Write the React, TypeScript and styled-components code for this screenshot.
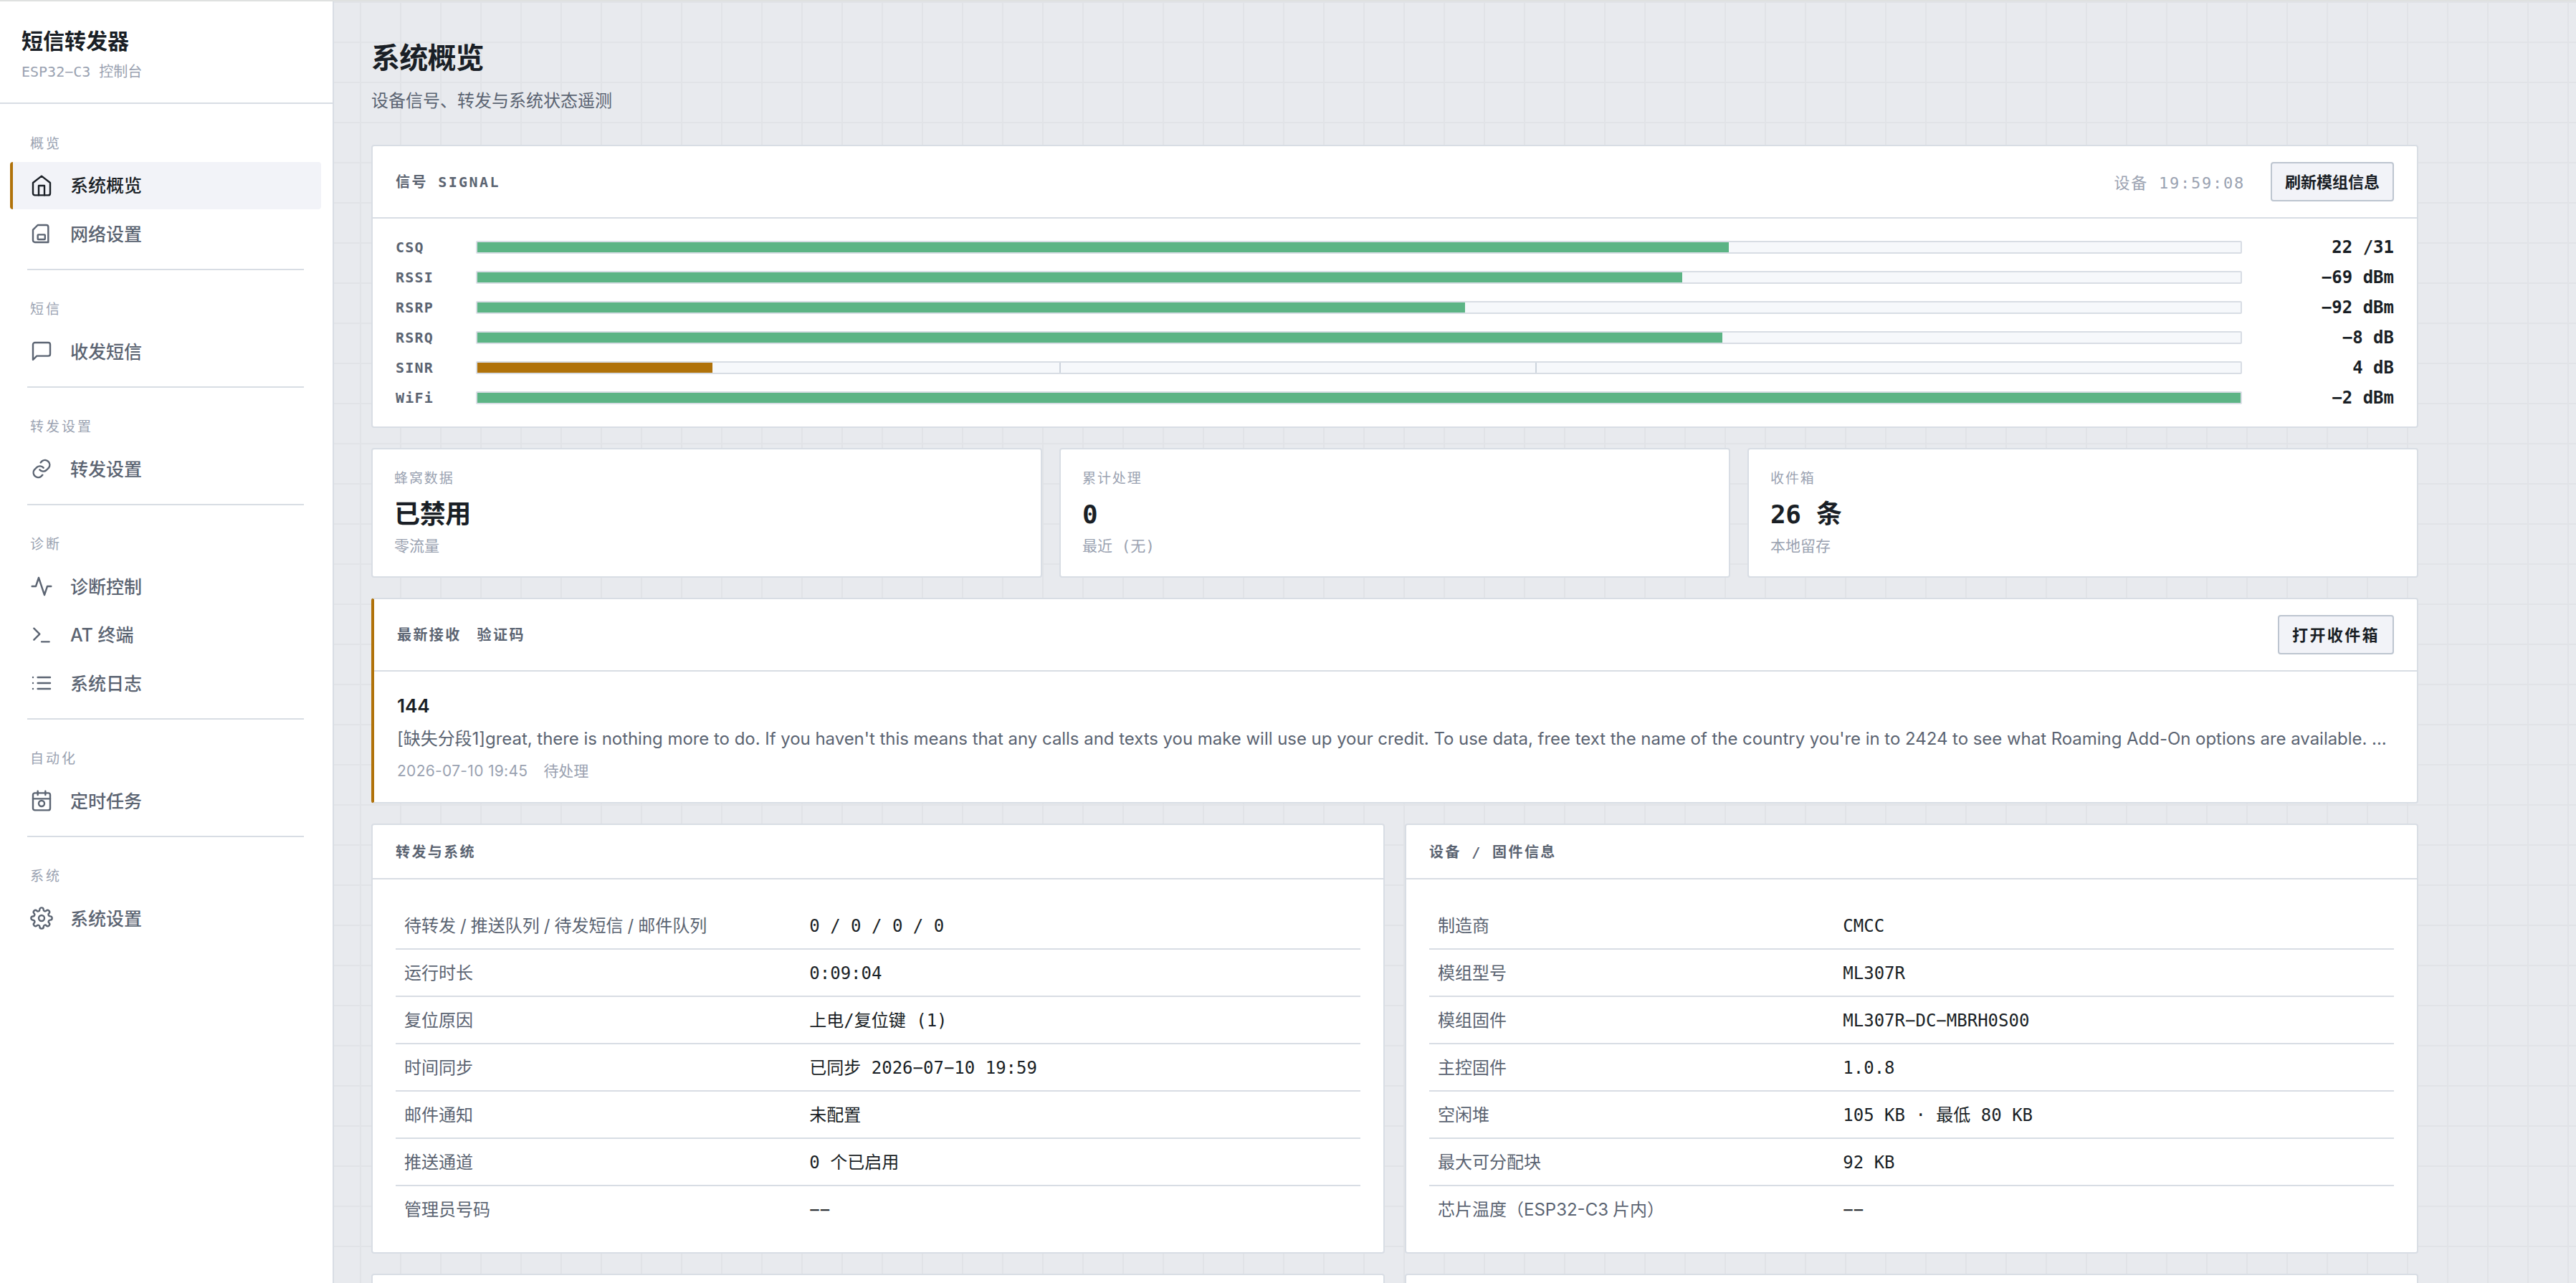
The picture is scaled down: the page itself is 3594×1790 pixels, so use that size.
import React from 'react';
import styled, { createGlobalStyle, css } from 'styled-components';

const theme = {
  sans: '"Inter", "Noto Sans CJK SC", sans-serif',
  mono: '"DejaVu Sans Mono", "Noto Sans CJK SC", monospace',
  colors: {
    page: '#e8eaee',
    grid: '#e1e3e7',
    surface: '#ffffff',
    raised: '#f2f3f8',
    track: '#f6f8fb',
    line: '#d8dde4',
    lineStrong: '#bdc5d0',
    tick: '#cdd4dd',
    text: '#1a1f26',
    muted: '#5b6472',
    faint: '#9aa2b1',
    ok: '#5cb485',
    warn: '#b0720a',
  },
};

const GlobalStyle = createGlobalStyle`
  * {
    box-sizing: border-box;
  }

  body {
    margin: 0;
    overflow: hidden;
    background: ${theme.colors.page};
    color: ${theme.colors.text};
    font-family: ${theme.sans};
    -webkit-font-smoothing: antialiased;
  }

  h1, h2, p, dl, dt, dd {
    margin: 0;
    font: inherit;
  }
`;

const Shell = styled.div`
  display: grid;
  grid-template-columns: 466px 1fr;
  height: 1790px;
  overflow: hidden;
  border-top: 2px solid #dfe1e0;
`;

const Sidebar = styled.aside`
  background: ${theme.colors.surface};
  border-right: 2px solid ${theme.colors.line};
`;

const Brand = styled.div`
  height: 143px;
  padding: 35px 30px 0;
  border-bottom: 2px solid ${theme.colors.line};
`;

const BrandName = styled.div`
  font-size: 30px;
  line-height: 40px;
  font-weight: 700;
`;

const BrandSub = styled.div`
  margin-top: 9px;
  font-family: ${theme.mono};
  font-size: 20px;
  line-height: 28px;
  color: ${theme.colors.faint};
`;

const Nav = styled.nav`
  padding: 0.5px 16px 0 14px;
`;

const NavGroup = styled.div`
  display: flex;
  flex-direction: column;
  gap: 2px;

  & + &::before {
    content: '';
    height: 2px;
    margin: 16px 24px -2px;
    background: ${theme.colors.line};
  }
`;

const NavLabel = styled.div`
  padding: 43px 28px 11.5px;
  font-size: 19px;
  line-height: 24px;
  letter-spacing: 0.16em;
  color: ${theme.colors.faint};
`;

const NavItem = styled.a<{ $active?: boolean }>`
  display: flex;
  align-items: center;
  gap: 24px;
  height: 65.5px;
  padding-left: 24px;
  border-left: 4px solid transparent;
  border-radius: 4px;
  font-size: 25px;
  font-weight: 500;
  color: ${theme.colors.muted};

  ${({ $active }) =>
    $active &&
    css`
      background: ${theme.colors.raised};
      border-left-color: ${theme.colors.warn};
      color: ${theme.colors.text};
    `}

  svg {
    width: 32px;
    height: 32px;
    fill: none;
    stroke: currentColor;
    stroke-width: 1.8;
    stroke-linecap: round;
    stroke-linejoin: round;
  }
`;

const NavText = styled.span`
  padding-bottom: 3px;
`;

const Main = styled.main`
  padding: 52.5px 220px 0 52px;
  background-color: ${theme.colors.page};
  background-image: linear-gradient(${theme.colors.grid} 2px, transparent 2px),
    linear-gradient(90deg, ${theme.colors.grid} 2px, transparent 2px);
  background-size: 56px 56px;
  background-position: 36px 0;
`;

const PageTitle = styled.h1`
  font-size: 40px;
  line-height: 52px;
  font-weight: 700;
  letter-spacing: -0.02em;
`;

const PageSub = styled.p`
  margin: 16px 0 43.5px;
  font-size: 24px;
  line-height: 36px;
  color: ${theme.colors.muted};
`;

const Panel = styled.section<{ $accent?: boolean }>`
  margin-bottom: 28px;
  background: ${theme.colors.surface};
  border: 2px solid ${theme.colors.line};
  border-radius: 4px;
  ${({ $accent }) => $accent && `border-left: 4px solid ${theme.colors.warn};`}
`;

const PanelHead = styled.h2<{ $short?: boolean }>`
  display: flex;
  align-items: center;
  height: ${({ $short }) => ($short ? 76 : 101)}px;
  padding: 0 32px;
  border-bottom: 2px solid ${theme.colors.line};
  font-family: ${theme.mono};
  font-size: 20px;
  font-weight: 600;
  letter-spacing: 0.12em;
  color: ${theme.colors.muted};
`;

const HeadText = styled.span`
  padding-bottom: 2px;

  & + & {
    margin-left: 22px;
  }
`;

const HeadActions = styled.div`
  display: flex;
  align-items: center;
  gap: 36px;
  margin-left: auto;
`;

const Clock = styled.span`
  padding-bottom: 2px;
  font-size: 22px;
  font-weight: 400;
  letter-spacing: 0.08em;
  color: ${theme.colors.faint};
`;

const Button = styled.button<{ $spaced?: boolean }>`
  height: 55px;
  padding: 0 18px 4px;
  background: ${theme.colors.raised};
  border: 2px solid ${theme.colors.lineStrong};
  border-radius: 4px;
  font-family: ${theme.sans};
  font-size: 22px;
  font-weight: 600;
  letter-spacing: ${({ $spaced }) => ($spaced ? '2.4px' : 'normal')};
  color: ${theme.colors.text};
`;

const Meters = styled.div`
  display: flex;
  flex-direction: column;
  gap: 18px;
  padding: 28px 32px;
`;

const Meter = styled.div`
  display: grid;
  grid-template-columns: 88px 1fr 188px;
  gap: 24px;
  align-items: center;
  height: 24px;
`;

const MeterName = styled.span`
  font-family: ${theme.mono};
  font-size: 20px;
  font-weight: 600;
  letter-spacing: 0.06em;
  color: ${theme.colors.muted};
`;

const Track = styled.div`
  position: relative;
  height: 18px;
  background: ${theme.colors.track};
  border: 2px solid ${theme.colors.line};
  border-radius: 2px;
`;

const Fill = styled.div<{ $warn?: boolean }>`
  height: 100%;
  background: ${({ $warn }) => ($warn ? theme.colors.warn : theme.colors.ok)};
`;

const Tick = styled.i`
  position: absolute;
  top: 0;
  bottom: 0;
  width: 2px;
  background: ${theme.colors.tick};
`;

const MeterValue = styled.span`
  font-family: ${theme.mono};
  font-size: 24px;
  line-height: 24px;
  font-weight: 700;
  text-align: right;
`;

const StatGrid = styled.div`
  display: grid;
  grid-template-columns: repeat(3, 1fr);
  gap: 24px;
`;

const Stat = styled(Panel)`
  height: 181px;
  padding: 26.5px 30px 0;
`;

const StatLabel = styled.div`
  font-size: 19px;
  line-height: 28px;
  letter-spacing: 0.1em;
  color: ${theme.colors.faint};
`;

const StatValue = styled.div`
  margin: 14.5px 0 7px;
  font-family: ${theme.mono};
  font-size: 36px;
  line-height: 44px;
  font-weight: 700;
  letter-spacing: -0.01em;
`;

const StatHint = styled.div`
  font-family: ${theme.mono};
  font-size: 21px;
  line-height: 30px;
  color: ${theme.colors.faint};
`;

const Message = styled.div`
  padding: 28px 32px;
`;

const Sender = styled.div`
  font-size: 26px;
  line-height: 40px;
  font-weight: 600;
`;

const MessageText = styled.p`
  margin: 6px -8px 9px 0;
  font-size: 24px;
  line-height: 40px;
  letter-spacing: -0.037px;
  white-space: nowrap;
  color: ${theme.colors.muted};
`;

const MessageMeta = styled.div`
  display: flex;
  gap: 22px;
  height: 31px;
  font-size: 21px;
  line-height: 32px;
  color: ${theme.colors.faint};
`;

const MessageTime = styled.span`
  letter-spacing: 0.3px;
`;

const Columns = styled.div`
  display: grid;
  grid-template-columns: 1fr 1fr;
  column-gap: 28px;
`;

const Facts = styled.dl`
  padding: 32px 32px 28px;
`;

const Fact = styled.div`
  display: grid;
  grid-template-columns: 42% 1fr;
  align-items: center;
  height: 66px;
  padding-top: 1px;
  border-bottom: 2px solid ${theme.colors.line};
  font-size: 24px;
  line-height: 32px;

  &:last-child {
    height: 64px;
    border-bottom: 0;
  }
`;

const FactName = styled.dt`
  padding-left: 12px;
  word-spacing: -0.7px;
  color: ${theme.colors.muted};
`;

const FactValue = styled.dd`
  padding-left: 12px;
  font-family: ${theme.mono};
`;

const icons = {
  home: (
    <>
      <path d="m3 9 9-7 9 7v11a2 2 0 0 1-2 2H5a2 2 0 0 1-2-2z" />
      <path d="M9 22V12h6v10" />
    </>
  ),
  sim: (
    <>
      <path d="M19 21H5a2 2 0 0 1-2-2V8l5-5h9a2 2 0 0 1 2 2z" />
      <rect x="8" y="13" width="7.6" height="5" rx="0.6" />
    </>
  ),
  message: <path d="M21 15a2 2 0 0 1-2 2H7l-4 4V5a2 2 0 0 1 2-2h14a2 2 0 0 1 2 2z" />,
  link: (
    <>
      <path d="M10 13a5 5 0 0 0 7 .5l2.5-2.5a5 5 0 0 0-7-7L11 5.5" />
      <path d="M14 11a5 5 0 0 0-7-.5L4.5 13a5 5 0 0 0 7 7l1.5-1.5" />
    </>
  ),
  activity: <path d="M22 12h-4l-3 9L9 3l-3 9H2" />,
  terminal: <path d="m4 17 6-6-6-6M12 19h8" />,
  list: <path d="M8 6h13M8 12h13M8 18h13M3 6h.01M3 12h.01M3 18h.01" />,
  calendar: (
    <>
      <rect x="3" y="4" width="18" height="18" rx="2" />
      <path d="M16 2v4M8 2v4M3 10h18" />
      <circle cx="12" cy="15" r="3" />
    </>
  ),
  settings: (
    <>
      <circle cx="12" cy="12" r="3" />
      <path d="M19.4 15a1.65 1.65 0 0 0 .33 1.82l.06.06a2 2 0 0 1-2.83 2.83l-.06-.06a1.65 1.65 0 0 0-1.82-.33 1.65 1.65 0 0 0-1 1.51V21a2 2 0 0 1-4 0v-.09A1.65 1.65 0 0 0 9 19.4a1.65 1.65 0 0 0-1.82.33l-.06.06a2 2 0 0 1-2.83-2.83l.06-.06a1.65 1.65 0 0 0 .33-1.82 1.65 1.65 0 0 0-1.51-1H3a2 2 0 0 1 0-4h.09A1.65 1.65 0 0 0 4.6 9a1.65 1.65 0 0 0-.33-1.82l-.06-.06a2 2 0 0 1 2.83-2.83l.06.06a1.65 1.65 0 0 0 1.82.33H9a1.65 1.65 0 0 0 1-1.51V3a2 2 0 0 1 4 0v.09a1.65 1.65 0 0 0 1 1.51 1.65 1.65 0 0 0 1.82-.33l.06-.06a2 2 0 0 1 2.83 2.83l-.06.06a1.65 1.65 0 0 0-.33 1.82V9a1.65 1.65 0 0 0 1.51 1H21a2 2 0 0 1 0 4h-.09a1.65 1.65 0 0 0-1.51 1z" />
    </>
  ),
};

interface NavEntry {
  icon: keyof typeof icons;
  text: string;
  active?: boolean;
}

const navGroups: { label: string; items: NavEntry[] }[] = [
  {
    label: '概览',
    items: [
      { icon: 'home', text: '系统概览', active: true },
      { icon: 'sim', text: '网络设置' },
    ],
  },
  { label: '短信', items: [{ icon: 'message', text: '收发短信' }] },
  { label: '转发设置', items: [{ icon: 'link', text: '转发设置' }] },
  {
    label: '诊断',
    items: [
      { icon: 'activity', text: '诊断控制' },
      { icon: 'terminal', text: 'AT 终端' },
      { icon: 'list', text: '系统日志' },
    ],
  },
  { label: '自动化', items: [{ icon: 'calendar', text: '定时任务' }] },
  { label: '系统', items: [{ icon: 'settings', text: '系统设置' }] },
];

interface SignalRow {
  name: string;
  percent: number;
  value: string;
  warn?: boolean;
  ticks?: number[];
}

const signals: SignalRow[] = [
  { name: 'CSQ', percent: 70.97, value: '22 /31' },
  { name: 'RSSI', percent: 68.33, value: '−69 dBm' },
  { name: 'RSRP', percent: 56, value: '−92 dBm' },
  { name: 'RSRQ', percent: 70.59, value: '−8 dB' },
  { name: 'SINR', percent: 13.33, value: '4 dB', warn: true, ticks: [33, 60] },
  { name: 'WiFi', percent: 100, value: '−2 dBm' },
];

const stats = [
  { label: '蜂窝数据', value: '已禁用', hint: '零流量' },
  { label: '累计处理', value: '0', hint: '最近 (无)' },
  { label: '收件箱', value: '26 条', hint: '本地留存' },
];

const systemFacts = [
  ['待转发 / 推送队列 / 待发短信 / 邮件队列', '0 / 0 / 0 / 0'],
  ['运行时长', '0:09:04'],
  ['复位原因', '上电/复位键 (1)'],
  ['时间同步', '已同步 2026−07−10 19:59'],
  ['邮件通知', '未配置'],
  ['推送通道', '0 个已启用'],
  ['管理员号码', '−−'],
];

const deviceFacts = [
  ['制造商', 'CMCC'],
  ['模组型号', 'ML307R'],
  ['模组固件', 'ML307R−DC−MBRH0S00'],
  ['主控固件', '1.0.8'],
  ['空闲堆', '105 KB · 最低 80 KB'],
  ['最大可分配块', '92 KB'],
  ['芯片温度（ESP32-C3 片内）', '−−'],
];

const FactPanel: React.FC<{ title: string; rows: string[][] }> = ({ title, rows }) => (
  <Panel>
    <PanelHead $short>
      <HeadText>{title}</HeadText>
    </PanelHead>
    <Facts>
      {rows.map(([name, value]) => (
        <Fact key={name}>
          <FactName>{name}</FactName>
          <FactValue>{value}</FactValue>
        </Fact>
      ))}
    </Facts>
  </Panel>
);

const App: React.FC = () => (
  <>
    <GlobalStyle />
    <Shell>
      <Sidebar>
        <Brand>
          <BrandName>短信转发器</BrandName>
          <BrandSub>ESP32−C3 控制台</BrandSub>
        </Brand>
        <Nav>
          {navGroups.map((group) => (
            <NavGroup key={group.label}>
              <NavLabel>{group.label}</NavLabel>
              {group.items.map((item) => (
                <NavItem key={item.text} $active={item.active}>
                  <svg viewBox="0 0 24 24">{icons[item.icon]}</svg>
                  <NavText>{item.text}</NavText>
                </NavItem>
              ))}
            </NavGroup>
          ))}
        </Nav>
      </Sidebar>

      <Main>
        <PageTitle>系统概览</PageTitle>
        <PageSub>设备信号、转发与系统状态遥测</PageSub>

        <Panel>
          <PanelHead>
            <HeadText>信号 SIGNAL</HeadText>
            <HeadActions>
              <Clock>设备 19:59:08</Clock>
              <Button>刷新模组信息</Button>
            </HeadActions>
          </PanelHead>
          <Meters>
            {signals.map((row) => (
              <Meter key={row.name}>
                <MeterName>{row.name}</MeterName>
                <Track>
                  <Fill $warn={row.warn} style={{ width: `${row.percent}%` }} />
                  {row.ticks?.map((at) => (
                    <Tick key={at} style={{ left: `${at}%` }} />
                  ))}
                </Track>
                <MeterValue>{row.value}</MeterValue>
              </Meter>
            ))}
          </Meters>
        </Panel>

        <StatGrid>
          {stats.map((stat) => (
            <Stat key={stat.label}>
              <StatLabel>{stat.label}</StatLabel>
              <StatValue>{stat.value}</StatValue>
              <StatHint>{stat.hint}</StatHint>
            </Stat>
          ))}
        </StatGrid>

        <Panel $accent>
          <PanelHead>
            <HeadText>最新接收</HeadText>
            <HeadText>验证码</HeadText>
            <HeadActions>
              <Button $spaced>打开收件箱</Button>
            </HeadActions>
          </PanelHead>
          <Message>
            <Sender>144</Sender>
            <MessageText>
              [缺失分段1]great, there is nothing more to do. If you haven't this means that any calls
              and texts you make will use up your credit. To use data, free text the name of the
              country you're in to 2424 to see what Roaming Add-On options are available. ...
            </MessageText>
            <MessageMeta>
              <MessageTime>2026-07-10 19:45</MessageTime>
              <span>待处理</span>
            </MessageMeta>
          </Message>
        </Panel>

        <Columns>
          <FactPanel title="转发与系统" rows={systemFacts} />
          <FactPanel title="设备 / 固件信息" rows={deviceFacts} />
          <FactPanel title="" rows={[]} />
          <FactPanel title="" rows={[]} />
        </Columns>
      </Main>
    </Shell>
  </>
);

export default App;
